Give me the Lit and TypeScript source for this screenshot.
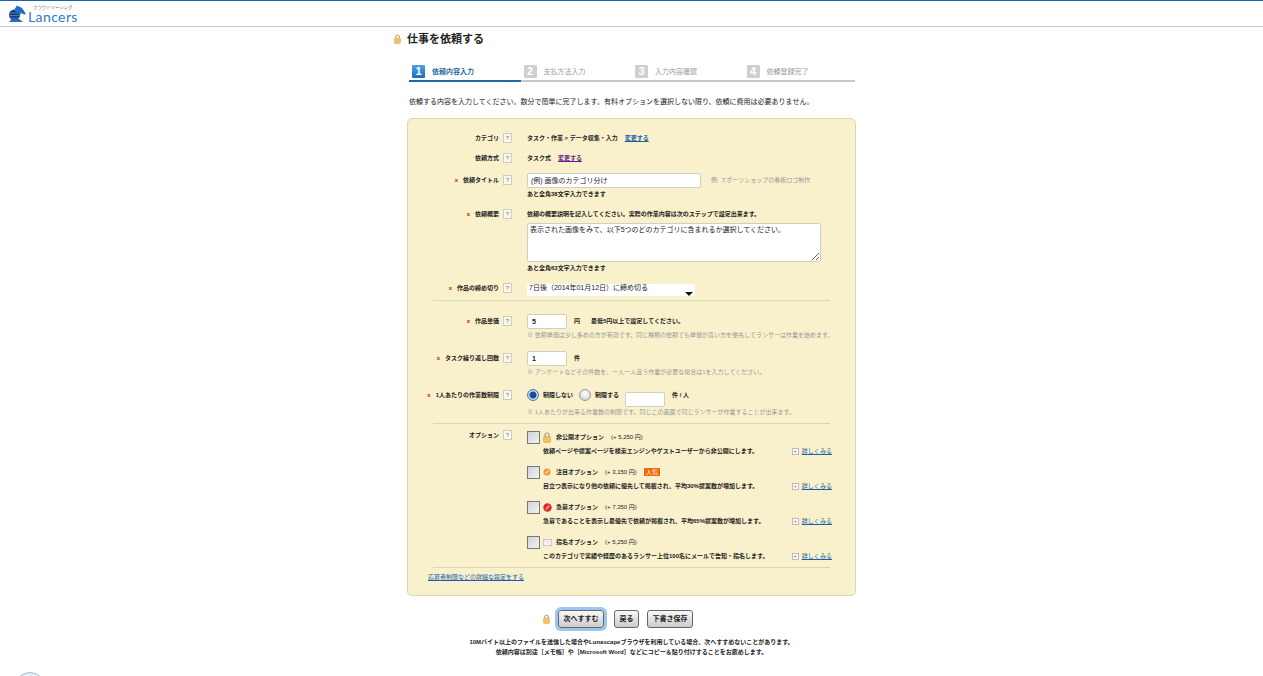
import { LitElement, html, css, svg } from 'lit';
import { customElement } from 'lit/decorators.js';

const lockIcon = (w: number, h: number) => html`
  <svg width=${w} height=${h} viewBox="0 0 8 11">
    <path d="M2 5V3a2 2 0 0 1 4 0v2" fill="none" stroke="#a89a80" stroke-width="1.2" />
    <rect x="0.5" y="4.5" width="7" height="6" rx="1" fill="#f4c060" stroke="#e0a640" stroke-width="0.6" />
  </svg>`;

const optionIcons: Record<string, unknown> = {
  lock: lockIcon(8, 11),
  star: html`<svg width="8" height="8" viewBox="0 0 9 9">
    <circle cx="4.5" cy="4.5" r="4" fill="#ee9a3c" />
    ${svg`<path d="M2.5 6.2 6.4 2.6" stroke="#fbe3b8" stroke-width="1.3" />`}
  </svg>`,
  urgent: html`<svg width="9" height="9" viewBox="0 0 9 9">
    <circle cx="4.5" cy="4.5" r="4.2" fill="#de2a2a" />
    ${svg`<path d="M3 6.4 6.2 2.6" stroke="#f7c0c0" stroke-width="1.2" />`}
  </svg>`,
  mail: html`<svg width="9" height="7" viewBox="0 0 10 8">
    <rect x="0.5" y="0.5" width="9" height="7" fill="#f4f4f4" stroke="#c4c4cc" />
    ${svg`<path d="M1 1 5 4.5 9 1" fill="none" stroke="#d0d0d8" stroke-width="0.7" />`}
  </svg>`,
};

const steps = ['依頼内容入力', '支払方法入力', '入力内容確認', '依頼登録完了'];

const options = [
  { icon: 'lock', name: '非公開オプション', price: '(+ 5,250 円)', desc: '依頼ページや提案ページを検索エンジンやゲストユーザーから非公開にします。', hot: false },
  { icon: 'star', name: '注目オプション', price: '(+ 3,150 円)', desc: '目立つ表示になり他の依頼に優先して掲載され、平均30%提案数が増加します。', hot: true },
  { icon: 'urgent', name: '急募オプション', price: '(+ 7,350 円)', desc: '急募であることを表示し最優先で依頼が掲載され、平均65%提案数が増加します。', hot: false },
  { icon: 'mail', name: '指名オプション', price: '(+ 5,250 円)', desc: 'このカテゴリで実績や経歴のあるランサー上位100名にメールで告知・指名します。', hot: false },
];

@customElement('app-root')
export class AppRoot extends LitElement {

  static styles = css`
    :host {
      display: block;
      position: relative;
      height: 676px;
      overflow: hidden;
      background: #fff;
      color: #222;
      font-family: "Liberation Sans", "Noto Sans CJK JP", sans-serif;
      font-size: 7px;
      line-height: 10px;
    }

    a {
      color: #1a5fa8;
      text-decoration: underline;
    }

    a.visited {
      color: #6a1b8a;
    }

    .header {
      height: 25px;
      border-top: 1px solid #1a64ad;
      border-bottom: 1px solid #c8c8c8;
      display: flex;
      align-items: center;
      padding-left: 8px;
      gap: 1px;
    }

    .logo-text {
      display: flex;
      flex-direction: column;
      color: #2a7cc8;
    }

    .logo-kana {
      font-size: 4.4px;
      line-height: 6px;
      color: #666;
      margin-left: 5px;
    }

    .logo-name {
      font-family: "Lato", sans-serif;
      font-size: 14px;
      line-height: 12px;
      letter-spacing: 0.4px;
    }

    .main {
      width: 449px;
      margin-left: 407px;
    }

    .title {
      position: relative;
      height: 36px;
      padding-top: 6px;
      box-sizing: border-box;
    }

    .title h1 {
      margin: 0;
      font-size: 11px;
      line-height: 13px;
      font-weight: bold;
      color: #222;
    }

    .title svg {
      position: absolute;
      left: -13px;
      top: 7px;
    }

    .steps {
      display: grid;
      grid-template-columns: repeat(4, 1fr);
      margin-left: 2px;
      margin-right: 1px;
      height: 19px;
    }

    .step {
      display: flex;
      align-items: center;
      gap: 7px;
      padding-left: 3px;
      box-sizing: border-box;
      border-bottom: 2px solid #c8c8c8;
      color: #9a9a9a;
    }

    .step.active {
      border-bottom-color: #1f6aa8;
      color: #1f6aa8;
      font-weight: bold;
    }

    .num {
      width: 13px;
      height: 13px;
      background: #cfcfcf;
      color: #fff;
      font-size: 11px;
      line-height: 13px;
      text-align: center;
      font-weight: bold;
      border-radius: 1px;
    }

    .active .num {
      background: linear-gradient(#4fa0e8, #1a6cc4);
    }

    .intro {
      margin: 15px 0 0 2px;
      height: 21px;
    }

    .panel {
      background: #f8f1cc;
      border: 1px solid #dcd6b4;
      border-radius: 5px;
      height: 478px;
      box-sizing: border-box;
      padding-top: 12px;
      font-size: 6px;
    }

    .row {
      display: grid;
      grid-template-columns: 104px minmax(0, 1fr);
      column-gap: 15px;
      align-items: start;
      white-space: nowrap;
    }

    .r-category { height: 20px; }
    .r-method { height: 22px; }
    .r-title { height: 34px; }
    .r-summary { height: 74px; }
    .r-deadline { height: 19px; }
    .r-price { height: 37px; margin-top: 13px; }
    .r-repeat { height: 37px; }
    .r-limit { height: 35px; }
    .r-options { margin-top: 7px; }

    .label {
      display: flex;
      justify-content: flex-end;
      align-items: center;
      gap: 4px;
      font-weight: bold;
      height: 14px;
    }

    .r-options .label {
      height: 8px;
    }

    .req {
      color: #c02020;
      margin-right: 1px;
    }

    .help {
      font-weight: normal;
      color: #777;
      border: 1px solid #ccc;
      background: #fbf8e6;
      width: 7px;
      height: 8px;
      line-height: 8px;
      text-align: center;
    }

    .line {
      display: flex;
      align-items: center;
      height: 14px;
      gap: 7px;
      font-weight: bold;
    }

    .hint {
      color: #999;
      font-weight: normal;
      margin-left: 3px;
    }

    .min-note {
      margin-left: 4px;
    }

    .sub {
      font-weight: bold;
      margin-top: 2px;
      height: 10px;
    }

    .sub.tight {
      margin-top: 1px;
    }

    .note {
      color: #999;
      margin-top: 2px;
      height: 10px;
    }

    .note.wide {
      margin-top: 5px;
    }

    input, textarea {
      font: inherit;
      font-size: 7px;
      color: #222;
      margin: 0;
      box-sizing: border-box;
      background: #fff;
      border: 1px solid #cfcfc4;
      border-radius: 2px;
      outline: none;
      flex: none;
    }

    .title-input {
      width: 174px;
      height: 15px;
      padding: 0 3px;
      font-weight: normal;
    }

    .small-input {
      width: 40px;
      height: 15px;
      padding: 0 4px;
      font-weight: bold;
    }

    .limit-input {
      width: 40px;
      height: 15px;
      margin-top: 8px;
    }

    textarea {
      display: block;
      width: 294px;
      height: 39px;
      margin-top: 2px;
      padding: 1px 2px;
      resize: both;
    }

    .select {
      position: relative;
      width: 168px;
      height: 12px;
      margin-top: 3px;
      background: #fff;
      border-radius: 2px;
      padding-left: 2px;
      box-sizing: border-box;
      font-size: 7px;
      line-height: 8px;
    }

    .select::after {
      content: "";
      position: absolute;
      right: 2px;
      bottom: 0;
      border-left: 4px solid transparent;
      border-right: 4px solid transparent;
      border-top: 4px solid #111;
    }

    hr {
      border: 0;
      height: 1px;
      background: #dad5b8;
      margin: 0 25px;
    }

    hr.after-options {
      margin-top: -4px;
    }

    .radio {
      width: 10px;
      height: 10px;
      border-radius: 50%;
      border: 1px solid #999;
      background: radial-gradient(circle at 50% 35%, #fff, #ccc);
      flex: none;
    }

    .radio.on {
      border-color: #4a7fb0;
      background: radial-gradient(circle, #14508f 0 3px, #cfe2f5 4px, #8fb4d8 6px);
    }

    .radios {
      gap: 4px;
    }

    .radios .t {
      margin-right: 2px;
    }

    .per-person {
      margin-left: 3px;
    }

    .option {
      display: grid;
      grid-template-columns: 13px minmax(0, 1fr);
      column-gap: 3px;
      height: 35px;
    }

    .check {
      width: 13px;
      height: 13px;
      box-sizing: border-box;
      border: 1px solid #777;
      background: linear-gradient(135deg, #cfd3da, #f2f2f2);
    }

    .opt-head {
      display: flex;
      align-items: center;
      height: 12px;
      font-weight: bold;
    }

    .opt-icon {
      display: flex;
      width: 13px;
      align-items: center;
    }

    .price {
      font-weight: normal;
      margin-left: 7px;
    }

    .hot {
      background: #ee6a10;
      color: #fff;
      font-weight: normal;
      line-height: 8px;
      padding: 0 2px;
      margin-left: 7px;
    }

    .opt-desc {
      display: flex;
      justify-content: space-between;
      font-weight: bold;
      margin-top: 3px;
      margin-right: 23px;
    }

    .more {
      display: flex;
      align-items: center;
      gap: 3px;
      font-weight: normal;
    }

    .plus {
      width: 5px;
      height: 5px;
      border: 1px solid #bbb;
      background: #fff;
      color: #777;
      font-size: 6px;
      line-height: 5px;
      text-align: center;
    }

    .detail-link {
      margin: 4px 0 0 20px;
    }

    .actions {
      display: flex;
      align-items: center;
      gap: 8px;
      margin-top: 11px;
      height: 23px;
      padding-left: 136px;
    }

    button {
      font: inherit;
      font-weight: bold;
      color: #222;
      height: 18px;
      padding: 0 4.5px;
      border: 1px solid #666;
      border-radius: 3px;
      background: linear-gradient(#f8f8f8, #cccccc);
    }

    button.primary {
      box-shadow: 0 0 0 3px #9cc6f0;
      margin-right: 2px;
    }

    .btn-lock {
      display: flex;
    }

    .foot {
      margin-top: 7px;
      text-align: center;
      font-weight: bold;
      font-size: 6px;
    }

    .bubble {
      position: absolute;
      left: 14px;
      top: 672px;
      width: 32px;
      height: 32px;
      box-sizing: border-box;
      border-radius: 50%;
      border: 1px solid #a8bccf;
      background: #e6eef5;
    }
  `;

  private help() {
    return html`<span class="help">?</span>`;
  }

  private label(text: string, required = false) {
    return html`<div class="label">
      ${required ? html`<span class="req">x</span>` : ''}<span>${text}</span>${this.help()}
    </div>`;
  }

  render() {
    return html`
      <div class="header">
        <svg width="19" height="18" viewBox="0 0 19 18">
          <circle cx="6.5" cy="10" r="5.5" fill="#123d78" />
          <path d="M1.5 8h10M1.2 10.5h10.5M2 13h9" stroke="#6f93bf" stroke-width="0.7" />
          <path d="M6 5 9 0.5 14 3l4 6-2 0.5-3-1.5-1 2z" fill="#1f6fc4" />
          <path d="M1 17l3-3h7l4 3z" fill="#1f6fc4" />
        </svg>
        <div class="logo-text">
          <span class="logo-kana">クラウドソーシング</span>
          <span class="logo-name">Lancers</span>
        </div>
      </div>

      <div class="main">
        <div class="title">
          ${lockIcon(7, 10)}
          <h1>仕事を依頼する</h1>
        </div>

        <div class="steps">
          ${steps.map((s, i) => html`
            <div class="step ${i === 0 ? 'active' : ''}">
              <span class="num">${i + 1}</span><span>${s}</span>
            </div>`)}
        </div>

        <div class="intro">依頼する内容を入力してください。数分で簡単に完了します。有料オプションを選択しない限り、依頼に費用は必要ありません。</div>

        <div class="panel">
          <div class="row r-category">
            ${this.label('カテゴリ')}
            <div class="line"><span>タスク・作業 &gt; データ収集・入力</span><a href="#">変更する</a></div>
          </div>
          <div class="row r-method">
            ${this.label('依頼方式')}
            <div class="line"><span>タスク式</span><a class="visited" href="#">変更する</a></div>
          </div>

          <div class="row r-title">
            ${this.label('依頼タイトル', true)}
            <div>
              <div class="line">
                <input class="title-input" value="(例) 画像のカテゴリ分け" />
                <span class="hint">例: スポーツショップの看板ロゴ制作</span>
              </div>
              <div class="sub">あと全角38文字入力できます</div>
            </div>
          </div>

          <div class="row r-summary">
            ${this.label('依頼概要', true)}
            <div>
              <div class="line">依頼の概要説明を記入してください。実際の作業内容は次のステップで設定出来ます。</div>
              <textarea>表示された画像をみて、以下5つのどのカテゴリに含まれるか選択してください。</textarea>
              <div class="sub tight">あと全角63文字入力できます</div>
            </div>
          </div>

          <div class="row r-deadline">
            ${this.label('作品の締め切り', true)}
            <div class="select">7日後（2014年01月12日）に締め切る</div>
          </div>
          <hr />

          <div class="row r-price">
            ${this.label('作品単価', true)}
            <div>
              <div class="line"><input class="small-input" value="5" /><span>円</span><span class="min-note">最低5円以上で設定してください。</span></div>
              <div class="note">※ 依頼単価は少し多めの方が有効です。同じ種類の依頼でも単価が高い方を優先してランサーは作業を始めます。</div>
            </div>
          </div>

          <div class="row r-repeat">
            ${this.label('タスク繰り返し回数', true)}
            <div>
              <div class="line"><input class="small-input" value="1" /><span>件</span></div>
              <div class="note">※ アンケートなどその件数を、一人一人違う作業が必要な場合は1を入力してください。</div>
            </div>
          </div>

          <div class="row r-limit">
            ${this.label('1人あたりの作業数制限', true)}
            <div>
              <div class="line radios">
                <span class="radio on"></span><span class="t">制限しない</span>
                <span class="radio"></span><span class="t">制限する</span>
                <input class="limit-input" /><span class="per-person">件 / 人</span>
              </div>
              <div class="note wide">※ 1人あたりが出来る作業数の制限です。同じこの画面で同じランサーが作業することが出来ます。</div>
            </div>
          </div>
          <hr />

          <div class="row r-options">
            ${this.label('オプション')}
            <div>
              ${options.map((o) => html`
                <div class="option">
                  <span class="check"></span>
                  <div>
                    <div class="opt-head">
                      <span class="opt-icon">${optionIcons[o.icon]}</span>
                      <span>${o.name}</span>
                      <span class="price">${o.price}</span>
                      ${o.hot ? html`<span class="hot">人気</span>` : ''}
                    </div>
                    <div class="opt-desc">
                      <span>${o.desc}</span>
                      <span class="more"><span class="plus">+</span><a href="#">詳しくみる</a></span>
                    </div>
                  </div>
                </div>`)}
            </div>
          </div>
          <hr class="after-options" />
          <div class="detail-link"><a href="#">応募者制限などの詳細な設定をする</a></div>
        </div>

        <div class="actions">
          <span class="btn-lock">${lockIcon(7, 10)}</span>
          <button class="primary">次へすすむ</button>
          <button>戻る</button>
          <button>下書き保存</button>
        </div>

        <div class="foot">
          10Mバイト以上のファイルを送信した場合やLunascapeブラウザを利用している場合、次へすすめないことがあります。<br />
          依頼内容は別途［メモ帳］や［Microsoft Word］などにコピー＆貼り付けすることをお薦めします。
        </div>
      </div>

      <div class="bubble"></div>
    `;
  }
}
